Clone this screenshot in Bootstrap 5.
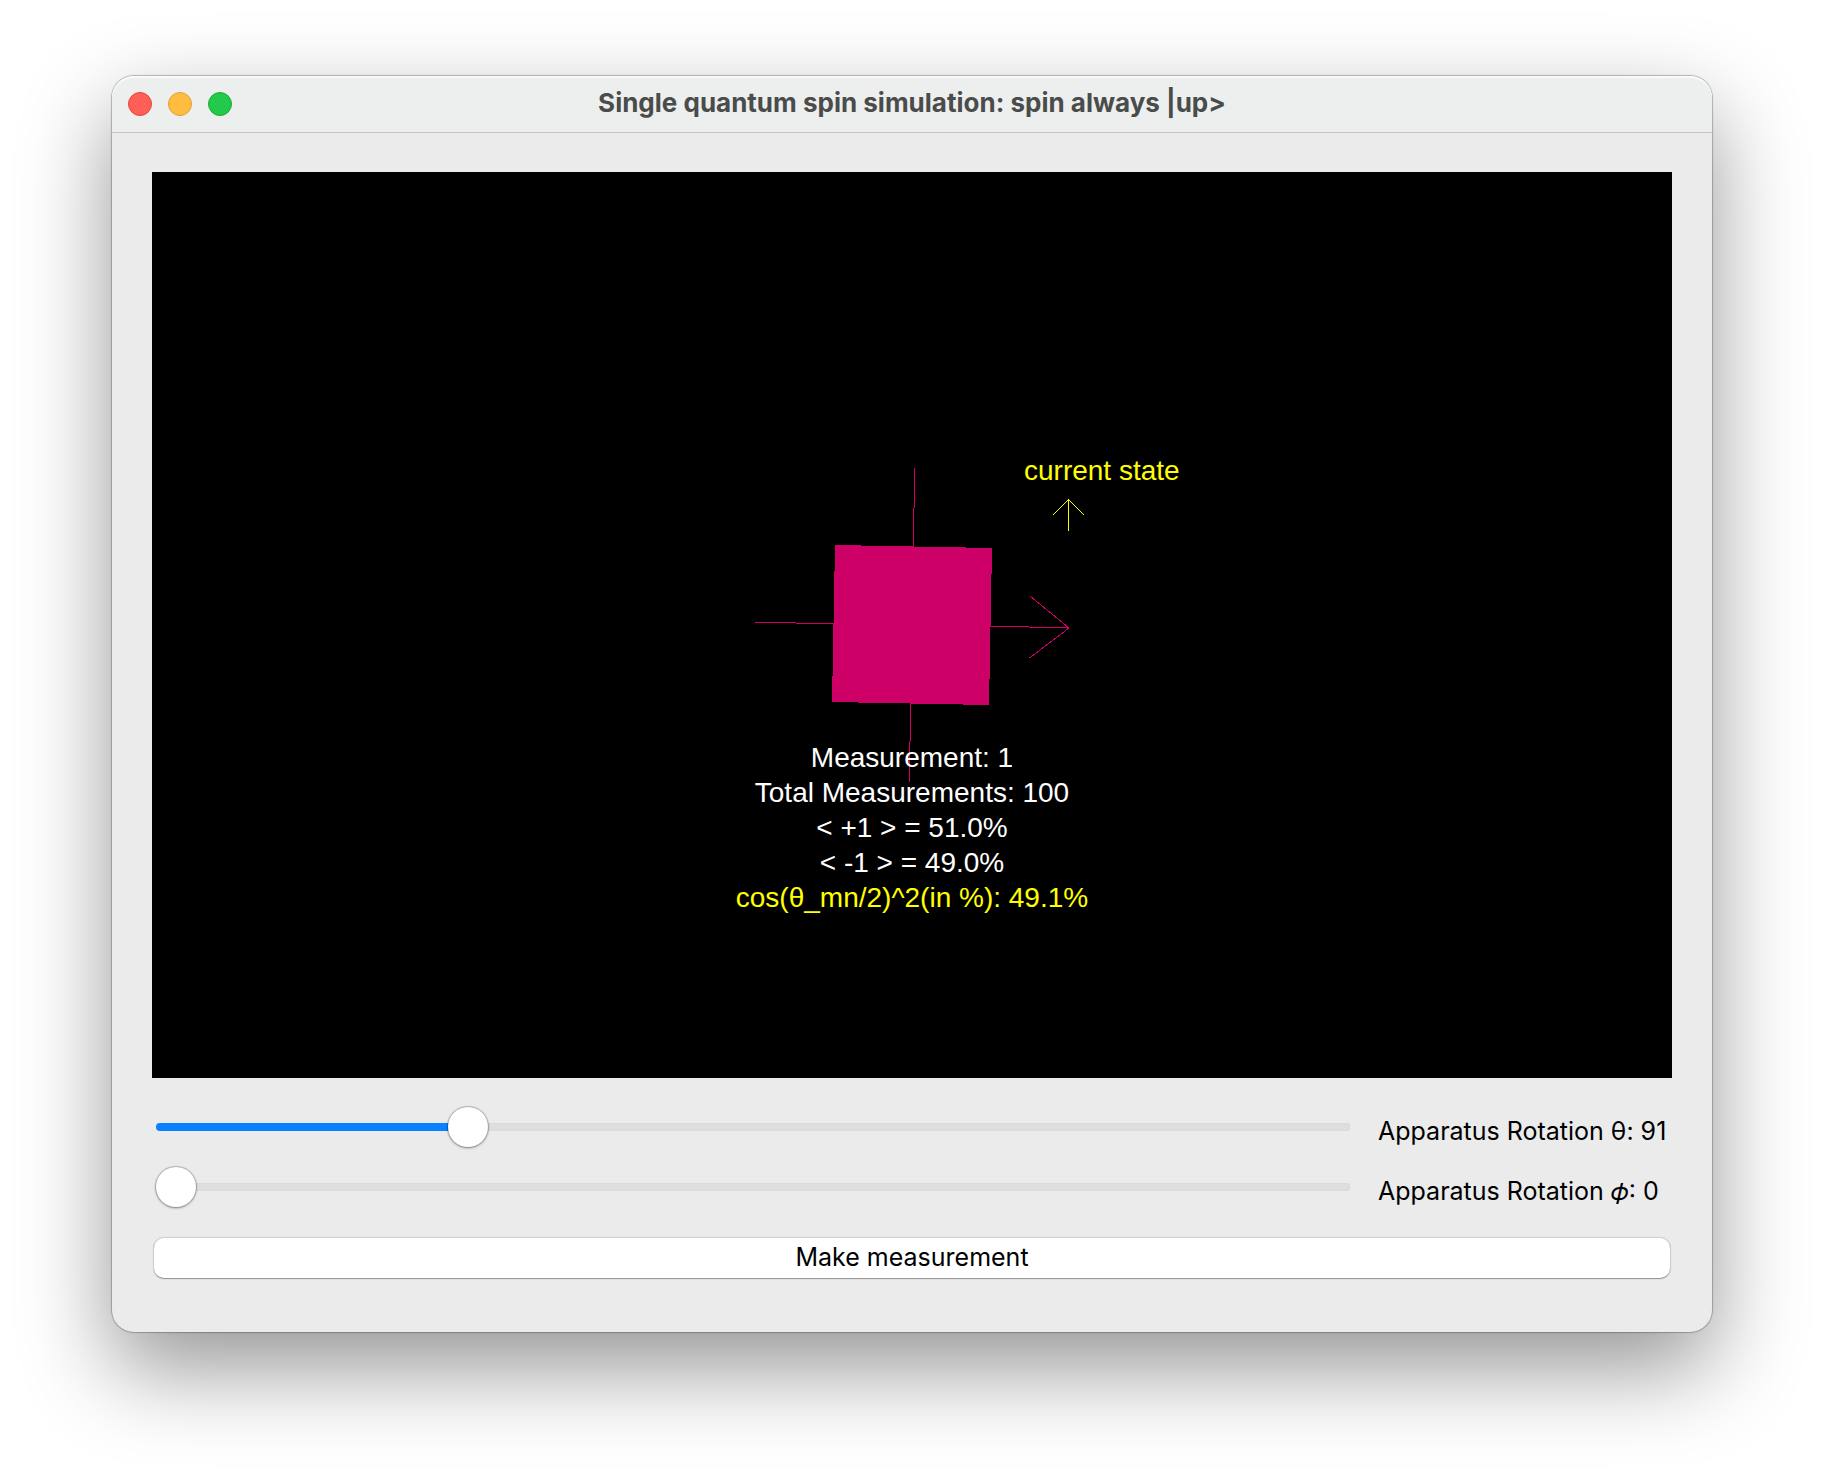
<!DOCTYPE html>
<html lang="en">
<head>
<meta charset="utf-8">
<meta name="viewport" content="width=device-width, initial-scale=1">
<title>Single quantum spin simulation</title>
<link href="https://cdn.jsdelivr.net/npm/bootstrap@5.3.0/dist/css/bootstrap.min.css" rel="stylesheet">
<style>
  body { font-family: Inter, "Noto Sans", sans-serif; background: #fff; color: #000; padding: 76px 112px 148px; }
  .app-window {
    background: #ebebeb; border-radius: 22px;
    box-shadow: 0 0 1px 1px rgba(0,0,0,.25), 0 36px 90px rgba(0,0,0,.42);
  }
  .title-bar {
    height: 57px; padding: 0 16px; background: #edefee;
    border-bottom: 1px solid #c3c5c4; border-radius: 22px 22px 0 0;
    box-shadow: inset 0 2px 1px #f9fafa;
  }
  .window-lights { gap: 16px; flex: 1 0 0; }
  .light { width: 24px; height: 24px; border-radius: 50%; border: 1px solid; padding: 0; }
  .light-close { background: #ff5f57; border-color: #e2463f; }
  .light-min { background: #febc40; border-color: #dfa034; }
  .light-zoom { background: #22c94b; border-color: #1bac2c; }
  .window-title { font-size: 26px; font-weight: 700; line-height: 32px; color: #4a4c4b; margin: 0; padding-bottom: 2px; }
  .window-body { padding: 39px 40px 54px; }
  .scene { display: block; width: 100%; height: auto; background: #000; }
  .scene text { font-family: "Liberation Sans", Arial, sans-serif; font-size: 28px; }
  .controls { padding-top: 29px; gap: 20px; }
  .control-row { gap: 28px; padding-left: 4px; height: 40px; }
  .control-label { flex: 0 0 294px; font-size: 25px; line-height: 32px; padding-top: 8px; white-space: nowrap; }
  .slider { height: 40px; min-width: 0; --track: linear-gradient(to right, #0a82ff var(--fill), #dedede var(--fill)); }
  .slider::-webkit-slider-runnable-track { height: 8px; border-radius: 4px; background: var(--track); box-shadow: inset 0 0 1px rgba(0,0,0,.15); }
  .slider::-webkit-slider-thumb {
    width: 40px; height: 40px; margin-top: -16px; background: #fff; border: 0; border-radius: 50%;
    box-shadow: 0 0 1px 1px rgba(0,0,0,.22), 0 1px 3px rgba(0,0,0,.3);
  }
  .slider::-moz-range-track { height: 8px; border-radius: 4px; background: var(--track); }
  .slider::-moz-range-thumb { width: 40px; height: 40px; background: #fff; border: 0; border-radius: 50%; box-shadow: 0 0 2px 1px rgba(0,0,0,.3); }
  .measure-wrap { padding: 31px 2px 0; }
  .btn-measure {
    height: 40px; padding: 0 0 2px; font-size: 25px; line-height: 36px; border: 0; border-radius: 10px;
    background: #fff; color: #000;
    box-shadow: 0 0 1px 1px rgba(0,0,0,.12), 0 1px 1px rgba(0,0,0,.3);
  }
  .btn-measure:hover { background: #f5f5f5; }
</style>
</head>
<body>
<main class="app-window">
  <header class="title-bar d-flex align-items-center">
    <div class="window-lights d-flex">
      <button class="light light-close" type="button" aria-label="Close"></button>
      <button class="light light-min" type="button" aria-label="Minimize"></button>
      <button class="light light-zoom" type="button" aria-label="Zoom"></button>
    </div>
    <h1 class="window-title text-nowrap">Single quantum spin simulation: spin always |up&gt;</h1>
    <div class="window-lights"></div>
  </header>
  <div class="window-body">
    <svg class="scene" viewBox="0 0 1520 906" role="img" aria-label="Spin apparatus">
      <g fill="none" stroke="#cd0067" shape-rendering="crispEdges">
        <path d="M762.7 296L757.3 610M603 450.3L917 455.7M878 424L917 456L877.500 486"/>
        <path fill="#cd0067" stroke="none" d="M683 373L840 376L837 533L680 530Z"/>
        <path stroke="#ff0" d="M916.5 327V359M901 343L916.500 327.500L932 343"/>
      </g>
      <text x="872" y="308" fill="#ff0">current state</text>
      <g fill="#fff" text-anchor="middle">
        <text x="760" y="595">Measurement: 1</text>
        <text x="760" y="630">Total Measurements: 100</text>
        <text x="760" y="665">&lt; +1 &gt; = 51.0%</text>
        <text x="760" y="700">&lt; -1 &gt; = 49.0%</text>
        <text x="760" y="735" fill="#ff0">cos(θ_mn/2)^2(in %): 49.1%</text>
      </g>
    </svg>
    <div class="controls d-flex flex-column">
      <div class="control-row d-flex">
        <input class="slider form-range flex-fill" id="theta" type="range" min="0" max="360" value="91" style="--fill: 25.3%">
        <label class="control-label" for="theta">Apparatus Rotation θ: 91</label>
      </div>
      <div class="control-row d-flex">
        <input class="slider form-range flex-fill" id="phi" type="range" min="0" max="360" value="0" style="--fill: 0%">
        <label class="control-label" for="phi">Apparatus Rotation 𝜙: 0</label>
      </div>
    </div>
    <div class="measure-wrap">
      <button class="btn btn-measure w-100" type="button">Make measurement</button>
    </div>
  </div>
</main>
<script src="https://cdn.jsdelivr.net/npm/bootstrap@5.3.0/dist/js/bootstrap.bundle.min.js"></script>
</body>
</html>
